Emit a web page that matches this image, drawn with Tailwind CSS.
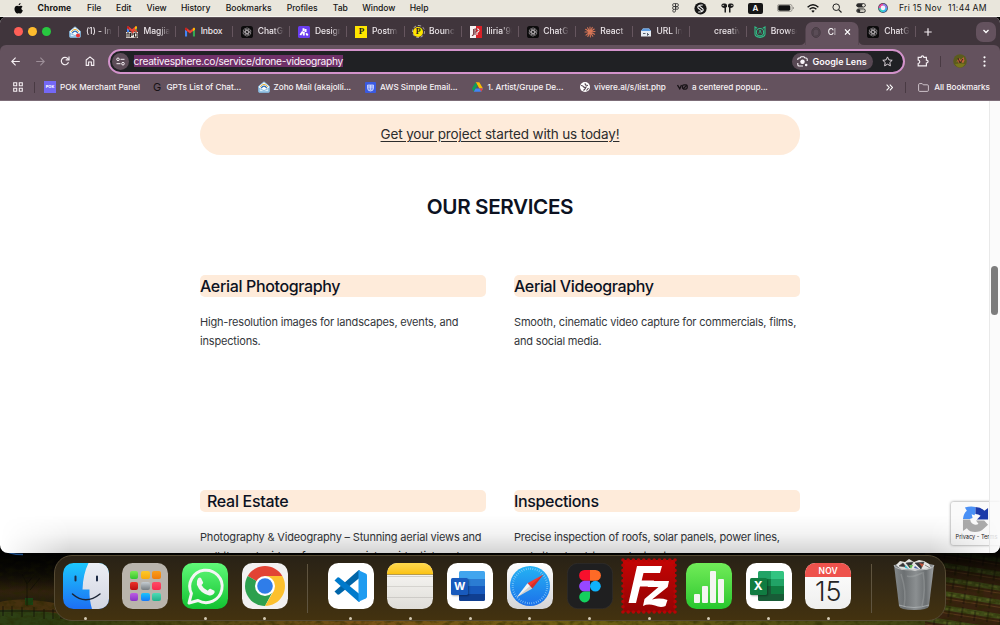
<!DOCTYPE html>
<html lang="en">
<head>
<meta charset="utf-8">
<title>Creative Sphere - Drone Videography</title>
<script src="https://cdn.jsdelivr.net/npm/@tailwindcss/browser@4"></script>
</head>
<body class="relative h-[625px] w-[1000px] overflow-hidden bg-black font-['Inter','Liberation_Sans',sans-serif]">

<!-- Symbols shared by several tabs and bookmarks -->
<svg class="absolute h-0 w-0">
  <defs>
    <symbol id="gpt" viewBox="0 0 12 12"><rect width="12" height="12" rx="2.6" fill="#0c0b0c"/><g fill="none" stroke="#aaa5a9" stroke-width=".65"><rect x="4.4" y="1.9" width="3.4" height="5.6" rx="1.7"/><rect x="4.4" y="1.9" width="3.4" height="5.6" rx="1.7" transform="rotate(60 6 6)"/><rect x="4.4" y="1.9" width="3.4" height="5.6" rx="1.7" transform="rotate(120 6 6)"/><rect x="4.4" y="1.9" width="3.4" height="5.6" rx="1.7" transform="rotate(180 6 6)"/><rect x="4.4" y="1.9" width="3.4" height="5.6" rx="1.7" transform="rotate(240 6 6)"/><rect x="4.4" y="1.9" width="3.4" height="5.6" rx="1.7" transform="rotate(300 6 6)"/></g></symbol>
    <symbol id="zoho" viewBox="0 0 12 12"><path d="M.6 5.200 6 .8l5.400 4.400v5.300q0 .9-.9.9h-9q-.9 0-.9-.9z" fill="#f4fafd" stroke="#7db8e0" stroke-width=".8"/><path d="M2.200 6Q6 .6 9.800 6" fill="none" stroke="#e6b03c" stroke-width="1"/><path d="M3.100 7.200Q6 3 8.900 7.200" fill="none" stroke="#2f6fb8" stroke-width="1.200"/><path d="M1.300 7.400 6 9.600l4.700-2.200v3.300H1.300z" fill="#d9edf8" stroke="#4f97d0" stroke-width=".6"/></symbol>
    <symbol id="gmail" viewBox="0 0 12 12"><path d="M1 2.500v8h2.100V5z" fill="#4285f4"/><path d="M11 2.500v8H8.900V5z" fill="#34a853"/><path d="M1 3.600V2.900q0-1.300 1.300-1.100L6 4.800l3.700-3q1.300-.2 1.300 1.100v.7L6 7.600z" fill="#ea4335"/><path d="M8.900 2.400v2.900L11 3.700v-.8q0-1.600-1.400-1.100z" fill="#fbbc04"/><path d="M1 2.900v.8l2.100 1.600V2.400L2.400 1.800Q1 1.300 1 2.900z" fill="#c5221f"/></symbol>
  </defs>
</svg>

<!-- Desktop wallpaper -->
<svg class="absolute left-0 top-[535px] h-[90px] w-[1000px]" viewBox="0 535 1000 90" preserveAspectRatio="none">
  <defs>
    <linearGradient id="hill" x2="0" y2="1"><stop offset=".2" stop-color="#050505"/><stop offset=".45" stop-color="#171309"/><stop offset=".62" stop-color="#33220f"/><stop offset=".75" stop-color="#211d0c"/><stop offset="1" stop-color="#29280c"/></linearGradient>
    <linearGradient id="shade" x2="0" y2="1"><stop offset=".15" stop-color="#000"/><stop offset=".4" stop-color="#000" stop-opacity=".5"/><stop offset=".65" stop-color="#000" stop-opacity="0"/></linearGradient>
    <linearGradient id="ground" x2="1"><stop offset="0" stop-color="#2c3d10"/><stop offset=".35" stop-color="#7a5318"/><stop offset=".6" stop-color="#6e6014"/><stop offset="1" stop-color="#3d4214"/></linearGradient>
    <pattern id="vines" width="26" height="14" patternUnits="userSpaceOnUse" patternTransform="rotate(9)"><rect width="26" height="14" fill="#38220f"/><path d="M0 2h26v5H0z" fill="#3f4b18"/><path d="M2 4h9M15 5h8" stroke="#566021" stroke-width="1.400"/><path d="M0 9.500h26" stroke="#5a381b"/><path d="M6 1v11M19 3v10" stroke="#120d08" stroke-width=".8"/></pattern>
    <filter id="leaf" x="0" y="0" width="1" height="1"><feTurbulence type="fractalNoise" baseFrequency=".13 .22" numOctaves="3" seed="4"/><feColorMatrix values="0 0 0 0 .02  0 0 0 0 .02  0 0 0 0 0  2.6 0 0 0 -1.05"/></filter>
  </defs>
  <rect y="535" width="1000" height="90" fill="url(#hill)"/>
  <path d="M0 602Q20 596 60 604V625H0z" fill="#46310f"/>
  <path d="M0 610Q25 608 60 614V625H0z" fill="#2d4014"/>
  <path d="M25 598h8v7h-8z" fill="#174414"/>
  <path d="M0 611h60M3 606v10M12 606v10M22 607v10M34 607v10M44 609v10M53 609v10M27 580v26M22 574l5 10 7-9M40 578l-10 12" stroke="#0f0c08" stroke-width=".8" fill="none"/>
  <rect x="50" y="619" width="900" height="6" fill="url(#ground)"/>
  <rect x="925" y="535" width="75" height="90" fill="url(#vines)"/>
  <rect y="535" width="1000" height="90" filter="url(#leaf)" opacity=".5"/>
  <rect y="535" width="1000" height="90" fill="url(#shade)"/>
  <path d="M3 549Q8 554.500 23 554.500" fill="none" stroke="#1d4b85" stroke-width="1.600"/>
</svg>

<div class="relative flex h-[553px] flex-col">

<!-- macOS menu bar -->
<header class="flex h-[17px] shrink-0 items-center border-b border-[#f7f5ef] bg-[#e9e6dc] text-[8.600px] leading-none text-[#161514]">
  <svg class="ml-[14px] h-[11px] w-[9.500px]" viewBox="0 0 19 22" fill="#0b0b0b"><path d="M13.200 0c.2 2.300-1.800 4.600-4 4.500C8.900 2.400 11 .3 13.200 0zM16.900 7.600c-3.300 2.100-2.700 6.300.8 7.600-1 2.900-3 5.800-4.700 5.900-1.400 0-1.800-.8-3.400-.8s-2.100.8-3.400.8C4 21.200.9 16.600.9 12.200c0-4.300 2.700-6.600 5.300-6.600 1.500 0 2.800 1 3.600 1 .9 0 2.300-1.100 4.100-1.100 1 0 2.500.6 3 2.100z"/></svg>
  <nav class="flex pl-[14px] font-medium tracking-[-0.040px]">
    <span class="w-[49.500px] font-bold tracking-[.1px]">Chrome</span><span class="w-[29px]">File</span><span class="w-[30.500px]">Edit</span><span class="w-[34.500px]">View</span><span class="w-[44.700px]">History</span><span class="w-[61px]">Bookmarks</span><span class="w-[46px]">Profiles</span><span class="w-[29.500px]">Tab</span><span class="w-[47.500px]">Window</span><span>Help</span>
  </nav>
  <div class="ml-auto flex items-center pr-[12px]">
    <svg class="mr-[15.500px] h-[10px] w-[7px]" viewBox="0 0 7 10" fill="none" stroke="#333" stroke-width=".8"><path d="M3.500.6H2a1.400 1.400 0 0 0 0 2.900h1.500zM3.500.6H5a1.400 1.400 0 0 1 0 2.900H3.500zM3.500 3.500H2a1.400 1.400 0 0 0 0 2.900h1.500zM2 6.400a1.400 1.400 0 1 0 1.500 1.500V3.500"/><circle cx="5" cy="5" r="1.400"/></svg>
    <svg class="mr-[13.500px] h-[13px] w-[13px]" viewBox="0 0 13 13"><circle cx="6.500" cy="6.500" r="6.100" fill="#161616"/><path d="M8.300 3 5.700 3.200Q3 4.400 4.200 6.200L7.300 8.600M4.700 10l2.600-.2q2.700-1.200 1.500-3L5.700 4.400" fill="none" stroke="#fff" stroke-width="1.100" stroke-linecap="round"/></svg>
    <svg class="mr-[14.500px] h-[10px] w-[13px]" viewBox="0 0 13 10" fill="#1b1b1b"><path d="M.3 2.500Q.5.400 2.500.4H4q2 .1 2 2V4l-1 .6v4.900H3.500V5L2.200 4.800Q.5 4.600.3 2.500zM12.700 2.500Q12.500.4 10.500.4H9q-2 .1-2 2V4l1 .6v4.900h1.500V5l1.300-.2q1.700-.2 1.900-2.300z"/><path d="M1.400 2.400h1.700M9.900 2.400h1.700" stroke="#e9e6dc" stroke-width=".8"/></svg>
    <span class="mr-[14px] flex h-[11px] w-[15px] items-center justify-center rounded-[2px] bg-[#161616] text-[8px] font-semibold text-white">A</span>
    <svg class="mr-[13px] h-[8px] w-[17px]" viewBox="0 0 17 8"><rect x=".4" y=".4" width="14.700" height="7.200" rx="2.200" fill="none" stroke="#8b8983" stroke-width=".8"/><rect x="1.300" y="1.300" width="12" height="5.400" rx="1.400" fill="#111"/><path d="M15.800 2.700q1.200.4 1.200 1.300t-1.200 1.300z" fill="#8b8983"/></svg>
    <svg class="mr-[13px] h-[9px] w-[12px]" viewBox="0 0 12 9" fill="none" stroke="#111" stroke-width="1.400"><path d="M.6 3.200q5.400-4.800 10.800 0M2.600 5.300q3.400-3 6.800 0"/><path d="m4.300 6.800 1.700 1.900 1.700-1.900Q6 5.500 4.300 6.800z" fill="#111" stroke="none"/></svg>
    <svg class="mr-[13.500px] h-[10px] w-[10px]" viewBox="0 0 10 10" fill="none" stroke="#222" stroke-width="1"><circle cx="4.200" cy="4.200" r="3.300"/><path d="m6.600 6.600 2.900 2.900" stroke-width="1.200"/></svg>
    <svg class="mr-[12.500px] h-[10px] w-[10px]" viewBox="0 0 10 10"><rect x=".3" y=".2" width="9.400" height="4.300" rx="2.150" fill="#2a2a2a"/><circle cx="7.500" cy="2.350" r="1.300" fill="#e9e6dc"/><rect x=".7" y="5.900" width="8.600" height="3.600" rx="1.800" fill="#c9c6bd" stroke="#2a2a2a" stroke-width=".9"/><circle cx="2.700" cy="7.700" r="1.600" fill="#2a2a2a"/></svg>
    <svg class="mr-[11px] h-[10px] w-[10px]" viewBox="0 0 10 10"><circle cx="5" cy="5" r="4.900" fill="#48455c"/><path d="M5 .8A4.200 4.200 0 0 0 .8 5l2 1Q3 3 5 2.500z" fill="#ec4ba0"/><path d="M5 .8A4.200 4.200 0 0 1 9.200 5L7 6Q7 3.500 5 2.500z" fill="#8c7ce8"/><path d="M9.200 5A4.200 4.200 0 0 1 5 9.200V7q2 0 2.200-2z" fill="#38b5ec"/><path d="M.8 5A4.200 4.200 0 0 0 5 9.200V7Q3 7 2.800 5z" fill="#35cfc0"/><circle cx="5" cy="4.900" r="2.300" fill="#f5f3fb"/></svg>
    <span class="w-[49px] tracking-[0.280px] whitespace-nowrap">Fri 15 Nov</span><span class="w-[40px] tracking-[0.400px] whitespace-nowrap">11:44&#8201;AM</span>
  </div>
</header>

<!-- Chrome window -->
<main class="flex min-h-0 flex-1 flex-col overflow-hidden rounded-t-[6px] rounded-b-[8px] bg-white">

  <!-- Tab strip -->
  <div class="flex h-[28px] shrink-0 items-center border-t border-[#5b5157] bg-[#40353c] text-[8.500px] leading-none font-medium tracking-[-0.030px] text-[#ece6ea]">
    <div class="flex w-[62px] shrink-0 gap-[5px] pl-[14px]"><i class="size-[9px] rounded-full bg-[#ff5f57]"></i><i class="size-[9px] rounded-full bg-[#febc2e]"></i><i class="size-[9px] rounded-full bg-[#28c840]"></i></div>

    <div class="flex w-[57.100px] shrink-0 items-center pl-[7px]"><svg class="mr-[5px] size-[12px] shrink-0"><use href="#zoho"/><circle cx="9" cy="9.500" r="2" fill="#e33"/></svg><span class="w-[26px] overflow-hidden whitespace-nowrap mask-r-from-60%">(1) - Inbox</span><i class="ml-auto h-[11px] w-px bg-[#66565f]"></i></div>
    <div class="flex w-[57.100px] shrink-0 items-center pl-[7px]"><svg class="mr-[5.500px] size-[12px] shrink-0" viewBox="0 0 12 12"><use href="#gmail" y="-1.500" width="12" height="12"/><rect y="6" width="12" height="5.800" fill="#efe9e4"/><path d="M1 11V7h2v4M4.500 11V7H7v2H5M8.500 7h2.500v4H8.500z" fill="none" stroke="#29211f" stroke-width="1"/><path d="m6 7 3-3 2 2" stroke="#e94335" stroke-width="1.400" fill="none"/></svg><span class="w-[26px] overflow-hidden whitespace-nowrap mask-r-from-60%">Magjiaprint</span><i class="ml-auto h-[11px] w-px bg-[#66565f]"></i></div>
    <div class="flex w-[57.100px] shrink-0 items-center pl-[8px]"><svg class="mr-[4.500px] size-[12px] shrink-0"><use href="#gmail"/></svg><span class="w-[26px] overflow-hidden tracking-[-0.150px] whitespace-nowrap">Inbox</span><i class="ml-auto h-[11px] w-px bg-[#66565f]"></i></div>
    <div class="flex w-[57.100px] shrink-0 items-center pl-[8px]"><svg class="mr-[4.500px] size-[12px] shrink-0"><use href="#gpt"/></svg><span class="w-[26px] overflow-hidden whitespace-nowrap mask-r-from-60%">ChatGPT</span><i class="ml-auto h-[11px] w-px bg-[#66565f]"></i></div>
    <div class="flex w-[57.100px] shrink-0 items-center pl-[8px]"><svg class="mr-[4.500px] size-[12px] shrink-0" viewBox="0 0 12 12"><rect width="12" height="12" rx="1.500" fill="#6a3df0"/><path d="M2.300 9 4.800 5.500M5.500 2.200v3M5.800 6v3.500M7.600 3v3M8.200 7.200 9.700 9.500" stroke="#fff" stroke-width="1.900" fill="none"/></svg><span class="w-[26px] overflow-hidden whitespace-nowrap mask-r-from-60%">Design tool</span><i class="ml-auto h-[11px] w-px bg-[#66565f]"></i></div>
    <div class="flex w-[57.100px] shrink-0 items-center pl-[8px]"><span class="mr-[4.500px] flex size-[12px] shrink-0 items-center justify-center bg-[#ffe600] font-['Liberation_Serif',serif] text-[9px] font-bold text-[#222]">P</span><span class="w-[26px] overflow-hidden whitespace-nowrap mask-r-from-60%">Postmark</span><i class="ml-auto h-[11px] w-px bg-[#66565f]"></i></div>
    <div class="flex w-[57.100px] shrink-0 items-center pl-[7px]"><span class="mr-[4.500px] flex size-[13px] shrink-0 items-center justify-center rounded-full border border-dashed border-[#b5adab]"><b class="flex size-[10px] shrink-0 items-center justify-center rounded-full bg-[#ffe600] font-['Liberation_Serif',serif] text-[8px] text-[#222]">P</b></span><span class="w-[26px] overflow-hidden whitespace-nowrap mask-r-from-60%">Bounce</span><i class="ml-auto h-[11px] w-px bg-[#66565f]"></i></div>
    <div class="flex w-[57.100px] shrink-0 items-center pl-[8px]"><svg class="mr-[4.500px] size-[12px] shrink-0" viewBox="0 0 12 12"><path d="M0 0h6v12H0z" fill="#f6f3f2"/><path d="M6 0h6v12H6z" fill="#d92128"/><path d="M3.600 3v5q0 1.600-1.700 1.600M5 9V3h2.600q1.700 1.600 0 3H5" fill="none" stroke="#7b3c42" stroke-width="1.100"/><path d="M7 3h1.400q1.200 1.500 0 3H7v3" fill="none" stroke="#fff" stroke-width="1"/></svg><span class="w-[26px] overflow-hidden whitespace-nowrap mask-r-from-60%">Iliria'98</span><i class="ml-auto h-[11px] w-px bg-[#66565f]"></i></div>
    <div class="flex w-[57.100px] shrink-0 items-center pl-[8px]"><svg class="mr-[4.500px] size-[12px] shrink-0"><use href="#gpt"/></svg><span class="w-[26px] overflow-hidden whitespace-nowrap mask-r-from-60%">ChatGPT</span><i class="ml-auto h-[11px] w-px bg-[#66565f]"></i></div>
    <div class="flex w-[57.100px] shrink-0 items-center pl-[8px]"><svg class="mr-[4.500px] size-[12px] shrink-0" viewBox="0 0 12 12" stroke="#d97757" stroke-width="1.050" stroke-linecap="round"><path d="M6 6V1M6 6l2.300-4.600M6 6l4.200-3M6 6l5-.6M6 6l4.600 2.200M6 6l2.800 4.200M6 6l.4 5M6 6l-2.200 4.500M6 6 2 9.200M6 6H1M6 6 1.600 3.300M6 6 3.500 1.700"/></svg><span class="w-[26px] overflow-hidden whitespace-nowrap mask-r-from-75%">React</span><i class="ml-auto h-[11px] w-px bg-[#66565f]"></i></div>
    <div class="flex w-[57.100px] shrink-0 items-center pl-[7px]"><svg class="mr-[4.500px] size-[12px] shrink-0" viewBox="0 0 12 12"><path d="M1 5 3 2.500h6L11 5v5.500H1z" fill="#e6ebf2"/><path d="M1 5 3 2.500h6L11 5z" fill="#5d9be0"/><path d="M3 7.500h2.500M7.500 7v2.500L9 8" stroke="#58606e" fill="none"/></svg><span class="w-[26px] overflow-hidden whitespace-nowrap mask-r-from-60%">URL Inspect</span><i class="ml-auto h-[11px] w-px bg-[#66565f]"></i></div>
    <div class="flex w-[57.100px] shrink-0 items-center pl-[24px]"><span class="w-[26px] overflow-hidden whitespace-nowrap mask-r-from-60%">creative</span><i class="ml-auto h-[11px] w-px bg-[#66565f]"></i></div>
    <div class="flex w-[57.100px] shrink-0 items-center pl-[7px]"><svg class="mr-[4.500px] size-[12px] shrink-0" viewBox="0 0 12 12" fill="none" stroke="#2fbf88" stroke-width="1.100"><path d="M3.200 2.200 1 1v7.300q0 1.700 2 2.300l3 .9 3-.9q2-.6 2-2.300V1L8.800 2.200"/><circle cx="6" cy="6.200" r="3.700"/><path d="m4.700 7.700.8-2 .5-1.700 1.400 3.700" stroke-width=".8"/></svg><span class="w-[26px] overflow-hidden whitespace-nowrap mask-r-from-60%">Browser</span></div>

    <!-- Active tab -->
    <div class="relative flex h-[23px] w-[53px] shrink-0 translate-x-[1.500px] translate-y-[2px] items-center rounded-t-[7px] bg-[#64525e] pb-[3px] pl-[5px]">
      <svg class="absolute bottom-0 -left-[6px] size-[6px]" viewBox="0 0 6 6"><path d="M6 0v6H0q6 0 6-6z" fill="#64525e"/></svg>
      <svg class="absolute -right-[6px] bottom-0 size-[6px]" viewBox="0 0 6 6"><path d="M0 0v6h6Q0 6 0 0z" fill="#64525e"/></svg>
      <svg class="mr-[6px] size-[11px] shrink-0" viewBox="0 0 12 12" fill="#5a4c56" stroke="#40363d" stroke-width=".9"><ellipse cx="6" cy="6" rx="4.600" ry="5.400"/><path d="M3 9V3.500L6 2l3 1.500V7Q9 10 4 10" fill="none" stroke-width=".6"/></svg><span class="w-[8.500px] overflow-hidden whitespace-nowrap text-white mask-r-from-70%">Cl</span>
      <svg class="ml-[8px] size-[6px]" viewBox="0 0 6 6" stroke="#fff" stroke-width="1.300"><path d="m.4.400 5.200 5.200M5.600.4.400 5.600"/></svg>
    </div>
    <div class="flex w-[58.500px] shrink-0 items-center pl-[10px]"><svg class="mr-[5px] size-[12px] shrink-0"><use href="#gpt"/></svg><span class="w-[26px] overflow-hidden whitespace-nowrap mask-r-from-60%">ChatGPT</span><i class="ml-auto h-[11px] w-px bg-[#66565f]"></i></div>
    <svg class="ml-[8.500px] size-[8px]" viewBox="0 0 8 8" stroke="#f3edf1" stroke-width="1.200"><path d="M4 .3v7.400M.3 4h7.400"/></svg>
    <span class="mr-[4.500px] ml-auto flex h-[20px] w-[19.500px] items-center justify-center rounded-[7px] bg-[#64525e]"><svg class="h-[5px] w-[6px]" viewBox="0 0 6 5" fill="none" stroke="#fff" stroke-width="1.300"><path d="m.5 1 2.500 2.500L5.500 1"/></svg></span>
  </div>

  <!-- Toolbar -->
  <div class="shrink-0 bg-[#40353c]">
  <div class="flex h-[32px] items-center rounded-t-[6px] bg-[#64525e]">
    <svg class="ml-[11px] size-[9px]" viewBox="0 0 9 9" fill="none" stroke="#f5eff3" stroke-width="1.100"><path d="M8.800 4.500H.9M4.600.7.800 4.500l3.800 3.800"/></svg>
    <svg class="ml-[15.500px] size-[9px]" viewBox="0 0 9 9" fill="none" stroke="#9d8e98" stroke-width="1.100"><path d="M.2 4.500h7.900M4.400.7l3.800 3.800-3.800 3.800"/></svg>
    <svg class="ml-[15.500px] size-[10px]" viewBox="0 0 10 10" fill="none" stroke="#f5eff3" stroke-width="1.200"><path d="M8.500 6.300A3.700 3.700 0 1 1 7.900 2.700l.9.900"/><path d="M9 .6v3.300H5.700"/></svg>
    <svg class="ml-[15px] h-[10px] w-[10px]" viewBox="0 0 10 10" fill="none" stroke="#f5eff3" stroke-width="1.100"><path d="M1.200 4 5 .9 8.800 4v5.400H6.400V6H3.600v3.400H1.200z"/></svg>
    <div class="ml-[12.500px] flex h-[25px] w-[797px] items-center rounded-full border-2 border-[#d393cb] bg-[#202124] pl-[2px]">
      <span class="flex size-[17px] items-center justify-center rounded-full bg-[#5d4d58]"><svg class="size-[9px]" viewBox="0 0 9 9" fill="none" stroke="#f5eff3" stroke-width="1"><circle cx="2" cy="2.300" r="1.300"/><path d="M4.500 2.300h4M.5 6.700h4"/><circle cx="7" cy="6.700" r="1.300"/></svg></span>
      <span class="ml-[5px] bg-[#6f3068] text-[10.200px] leading-[12px] tracking-[-0.290px] whitespace-nowrap text-[#fbf3fa]">creativesphere.co/service/drone-videography</span>
      <span class="ml-auto flex h-[17px] w-[81px] items-center rounded-full bg-[#574853] pl-[5.500px] text-[9px] leading-none font-semibold whitespace-nowrap text-[#fbf6fa]"><svg class="mr-[4.500px] size-[11px] shrink-0" viewBox="0 0 11 11" fill="none" stroke="#fbf6fa" stroke-width="1.100"><path d="M.8 4V3.300Q.8 2 2 2h1L4 .8h3L8 2h1q1.200 0 1.200 1.300V5M.8 7v1.700Q.8 10 2.100 10H6"/><circle cx="5.500" cy="5.800" r="1.700" fill="#fbf6fa"/><circle cx="9.200" cy="9" r=".7" fill="#fbf6fa"/></svg>Google Lens</span>
      <svg class="mr-[10px] ml-[9px] size-[11px]" viewBox="0 0 11 11" fill="none" stroke="#eee6ec" stroke-width=".9"><path d="m5.500.9 1.400 3 3.300.4-2.400 2.200.6 3.300-2.900-1.600-2.900 1.600.6-3.300L.8 4.300l3.300-.4z"/></svg>
    </div>
    <svg class="ml-[12px] size-[12px]" viewBox="0 0 12 12" fill="none" stroke="#f5eff3" stroke-width="1.200"><path d="M1.200 2.400h2.900q.2-1.500 1.400-1.500t1.400 1.500h2.500v2.800q1.700.1 1.700 1.400T9.400 8v2.900H1.200V8.500q1.600-.4 1.600-1.800T1.200 5z"/></svg>
    <i class="ml-[11.500px] h-[11px] w-px bg-[#493a43]"></i>
    <svg class="ml-[11.500px] size-[14px]" viewBox="0 0 14 14"><circle cx="7" cy="7" r="6.800" fill="#5b5c1d"/><path d="M3 8.500 6 4l2 2 2.500-3 1 3.500-1.500 3-2-2.500L6 10 5 7z" fill="#c4613b"/><path d="m5 4 2 5 3-4" stroke="#40221c" fill="none"/><path d="M2 10q5-1 10 0-2 3.500-5 3.500T2 10z" fill="#78761c"/></svg>
    <svg class="ml-[16px] h-[11px] w-[3px]" viewBox="0 0 3 11" fill="#fff"><circle cx="1.500" cy="1.300" r="1.100"/><circle cx="1.500" cy="5.500" r="1.100"/><circle cx="1.500" cy="9.700" r="1.100"/></svg>
  </div>
  </div>

  <!-- Bookmarks bar -->
  <div class="flex h-[24px] shrink-0 items-center border-b border-[#7c6c77] bg-[#64525e] pb-[3px] text-[8.200px] leading-none font-medium tracking-[-0.030px] whitespace-nowrap text-[#f8f3f6]">
    <svg class="ml-[13px] size-[10px]" viewBox="0 0 10 10" fill="none" stroke="#f5eff3" stroke-width="1.100"><path d="M.7.700h3v3h-3zM6.300.7h3v3h-3zM.7 6.300h3v3h-3zM6.300 6.300h3v3h-3z"/></svg>
    <i class="ml-[11px] h-[11px] w-px bg-[#493a43]"></i>
    <span class="ml-[9px] flex h-[12px] w-[12px] items-center justify-center bg-[#7468f5] text-[4px] font-bold text-white">POK</span>
    <span class="ml-[4px] w-[93px]">POK Merchant Panel</span>
    <span class="w-[13.500px] text-[11px] font-normal text-[#171216]">G</span><span class="w-[91.500px] tracking-[-0.010px]">GPTs List of Chat...</span>
    <svg class="mr-[3.500px] size-[12px] shrink-0"><use href="#zoho"/></svg><span class="w-[91.500px]">Zoho Mail (akajolli...</span>
    <svg class="mr-[4px] size-[11px] shrink-0" viewBox="0 0 11 11"><rect width="11" height="11" rx="1" fill="#3a5ae0"/><path d="M2.500 3h6v3q0 3-3 3t-3-3z" fill="#7f98f4" stroke="#e9edff" stroke-width=".7"/><path d="M3 5h5M5.500 3v5" stroke="#e9edff" stroke-width=".6"/></svg><span class="w-[92px]">AWS Simple Email...</span>
    <svg class="mr-[4.500px] h-[10px] w-[11px] shrink-0" viewBox="0 0 11 10"><path d="M3.700.2h3.600L11 6.600H7.400z" fill="#fbbc04"/><path d="M3.700.2 5.500 3.400 1.800 9.800 0 6.600z" fill="#0f9d58"/><path d="M3.600 6.600H11L9.200 9.800H1.800z" fill="#4285f4"/><path d="M7.400 6.600H11L9.200 9.800z" fill="#ea4335"/></svg><span class="w-[92px]">1. Artist/Grupe De...</span>
    <svg class="mr-[4.500px] size-[10px] shrink-0" viewBox="0 0 10 10"><circle cx="5" cy="5" r="5" fill="#fff"/><path d="M1 3.500q2 0 2.500 1.200T6 5.200L5 7 3.500 8.500M5 1.300l.5 1.700L8 3.500M6.500 8.500l2-2.500" fill="none" stroke="#544650" stroke-width="1.200"/></svg><span class="w-[83px]">vivere.al/s/list.php</span>
    <svg class="mr-[4px] h-[6px] w-[11px] shrink-0" viewBox="0 0 11 6" fill="none" stroke="#181317" stroke-width="1.300"><path d="m.5 1 2.300 3.800L4.500 1"/><rect x="5.500" y=".8" width="4.700" height="4.300" rx="1.500"/><path d="m6 5 4-4"/></svg><span>a centered popup...</span>
    <svg class="ml-auto h-[7px] w-[7px]" viewBox="0 0 7 7" fill="none" stroke="#fff" stroke-width="1.100"><path d="m.6.700 2.600 2.800L.6 6.300M3.800.7l2.600 2.800-2.600 2.800"/></svg>
    <i class="ml-[12.500px] h-[11px] w-px bg-[#493a43]"></i>
    <svg class="mr-[5px] ml-[12px] h-[9px] w-[11px]" viewBox="0 0 11 9" fill="none" stroke="#d8ced5" stroke-width=".9"><path d="M.6 7.300V1.700Q.6.6 1.700.6h2.500l1 1.200h4.100q1.100 0 1.100 1.100v4.400q0 1.100-1.100 1.100H1.700Q.6 8.400.6 7.300z"/></svg>
    <span class="mr-[10px]">All Bookmarks</span>
  </div>

  <!-- Web page -->
  <div class="relative flex min-h-0 flex-1">
    <section class="flex flex-1 flex-col overflow-hidden px-[200px] pt-[12.500px] pr-[189px] text-[#33363b]">
      <a class="flex h-[41.500px] shrink-0 items-center justify-center rounded-full bg-[#feebda] pt-[1px] text-[13.500px] leading-none tracking-[-0.140px] text-[#2c2c2c] underline underline-offset-[2px]">Get your project started with us today!</a>
      <h2 class="mt-[39px] text-center text-[20.700px] leading-[26px] font-semibold tracking-[-0.380px] text-[#0c1222]">OUR SERVICES</h2>
      <div class="mt-[54.500px] grid shrink-0 grid-cols-2 gap-x-[28px] text-[11px] leading-[19.500px] tracking-[-0.180px]">
        <article class="h-[215px]"><h3 class="h-[22px] rounded-[5px] bg-[#feebda] text-[16px] leading-[22px] font-medium tracking-[-0.350px] text-[#0c1222]">Aerial Photography</h3><p class="mt-[16px] whitespace-nowrap">High-resolution images for landscapes, events, and<br>inspections.</p></article>
        <article class="h-[215px]"><h3 class="h-[22px] rounded-[5px] bg-[#feebda] text-[16px] leading-[22px] font-medium tracking-[-0.370px] text-[#0c1222]">Aerial Videography</h3><p class="mt-[16px] whitespace-nowrap">Smooth, cinematic video capture for commercials, films,<br>and social media.</p></article>
        <article><h3 class="h-[22px] rounded-[5px] bg-[#feebda] pl-[7px] text-[16px] leading-[22px] font-medium tracking-[-0.300px] text-[#0c1222]">Real Estate</h3><p class="mt-[16px] whitespace-nowrap">Photography &amp; Videography – Stunning aerial views and<br>walkthrough videos for commercial, residential, and</p></article>
        <article><h3 class="h-[22px] rounded-[5px] bg-[#feebda] text-[16px] leading-[22px] font-medium tracking-[-0.350px] text-[#0c1222]">Inspections</h3><p class="mt-[16px] tracking-[-0.210px] whitespace-nowrap">Precise inspection of roofs, solar panels, power lines,<br>and other hard-to-reach structures.</p></article>
      </div>
    </section>

    <!-- reCAPTCHA badge -->
    <aside class="absolute right-0 bottom-[8.500px] flex h-[43px] w-[49px] flex-col items-center rounded-l-[2px] bg-[#fafafa] pt-[4px] shadow-[0_0_3px_#808080]">
      <svg class="h-[27px] w-[27px]" viewBox="0 0 28 28"><path d="M1 13.500Q1.500 7.500 5 4.800L3 1.500Q8.500 0 14 1v7q-1 .3-1 1.500l-3-1 1 4-3 1z" fill="#4a90f5"/><path d="M14 1q5.500 0 9.300 4L27 2v12H15.500l3.800-3.800Q17 8.300 14 8.200z" fill="#1c3aa9"/><path d="M1 14h7.500q.5 4.500 5 5.500 2.500.2 3.500-1l-2.500-3.500h8.500l4 4.500-4 3.500q-4 4-9.500 4-5.500 0-8.500-4L1 26z" fill="#ababab"/></svg>
      <span class="pt-[2px] pl-[2px] text-[5.600px] leading-none whitespace-nowrap text-[#222]">Privacy - Terms</span>
    </aside>

    <!-- Page scrollbar -->
    <div class="relative flex w-[11px] justify-center border-l border-[#e9e9e9] bg-[#fafafa]/85 pt-[165px] pr-px"><i class="h-[49px] w-[7px] rounded-full bg-[#7d7d7d]"></i></div>

    <!-- Shade that the dock casts on the window -->
    <div class="pointer-events-none absolute inset-x-0 bottom-0 h-[38px] bg-linear-to-t from-black/17 via-black/5 to-transparent mask-x-from-93%"></div>
  </div>
</main>
</div>

<!-- Dock -->
<footer class="absolute top-[554.500px] left-[54px] flex h-[66.500px] w-[892px] rounded-[18px] border border-[#554a33] bg-linear-to-b from-[#292216] to-[#43320f] pt-[7.500px] pl-[.800px]">
  <div class="flex w-[59.700px] shrink-0 flex-col items-center gap-[7.500px]">
    <svg class="size-[46px]" viewBox="0 0 46 46"><defs><linearGradient id="fb" x2="0" y2="1"><stop stop-color="#1cc7fd"/><stop offset="1" stop-color="#1d6ff3"/></linearGradient><linearGradient id="fw" x2="0" y2="1"><stop stop-color="#eceef4"/><stop offset="1" stop-color="#d2d6e2"/></linearGradient><clipPath id="r"><rect width="46" height="46" rx="10.500"/></clipPath></defs><g clip-path="url(#r)"><path d="M0 0h46v46H0z" fill="url(#fb)"/><path d="M25.500 0Q20 11 19.500 26.500h7Q26 36 29 46h17V0z" fill="url(#fw)"/></g><path d="M12.500 13.500v4M34 13.500v4" stroke="#1c2a44" stroke-width="2" stroke-linecap="round"/><path d="M9.500 31q13 11.500 27.500 0" fill="none" stroke="#1b2434" stroke-width="1.500" stroke-linecap="round"/></svg>
    <i class="size-[3px] rounded-full bg-[#d5cbb5]"></i>
  </div>
  <div class="flex w-[59.700px] shrink-0 flex-col items-center">
    <div class="grid size-[46px] grid-cols-[8.500px_8.500px_8.500px] place-content-center gap-[2.700px] rounded-[10.500px] bg-[#b9b4ac]"><i class="size-[8.500px] rounded-[2px] bg-linear-to-b from-[#7bea55] to-[#2fc52e]"></i><i class="size-[8.500px] rounded-[2px] bg-linear-to-b from-[#fcc928] to-[#f7a90c]"></i><i class="size-[8.500px] rounded-[2px] bg-linear-to-b from-[#fb9d1a] to-[#ee7c0c]"></i><i class="size-[8.500px] rounded-[2px] bg-linear-to-b from-[#ee3028] to-[#b80d10]"></i><i class="size-[8.500px] rounded-[2px] bg-linear-to-b from-[#c6cdd2] to-[#767d82]"></i><i class="size-[8.500px] rounded-[2px] bg-linear-to-b from-[#ff4a67] to-[#f72b4c]"></i><i class="size-[8.500px] rounded-[2px] bg-linear-to-b from-[#bd5be3] to-[#8734c6]"></i><i class="size-[8.500px] rounded-[2px] bg-linear-to-b from-[#1fc3fb] to-[#1b78f7]"></i><i class="size-[8.500px] rounded-[2px] bg-linear-to-b from-[#4ddbb5] to-[#20b18c]"></i></div>
  </div>
  <div class="flex w-[59.700px] shrink-0 flex-col items-center gap-[7.500px]">
    <svg class="size-[46px]" viewBox="0 0 46 46"><defs><linearGradient id="wa" x2="0" y2="1"><stop stop-color="#60f978"/><stop offset="1" stop-color="#12c231"/></linearGradient></defs><rect width="46" height="46" rx="10.500" fill="url(#wa)"/><path d="M7 40l2.400-9.500A16.200 16.200 0 1 1 16 37.500z" fill="none" stroke="#f5f5f5" stroke-width="3" stroke-linejoin="round"/><path d="M16 15.500q1.700-1.800 3-.6l2.200 4.500q0 1-1.700 2.700 2 4 6.300 5.700 1.400-2.300 2.600-2l4 2q1 1.500-.8 3.200-2 2-5 1.200-8.500-2.200-11.700-10.500-.7-3.400 1.100-6.200z" fill="#f5f5f5"/></svg>
    <i class="size-[3px] rounded-full bg-[#d5cbb5]"></i>
  </div>
  <div class="flex w-[59.700px] shrink-0 flex-col items-center gap-[7.500px]">
    <svg class="size-[46px]" viewBox="0 0 46 46"><rect width="46" height="46" rx="10.500" fill="#f2f1f1"/><path d="M23 23 5.700 13A20 20 0 0 1 40.300 13z" fill="#e24334"/><path d="M23 23 5.700 13A20 20 0 0 0 23 43l8-15z" fill="#2da04e"/><path d="M23 13h17.300A20 20 0 0 1 23 43l8.700-15z" fill="#fcc02e"/><circle cx="23" cy="23" r="10" fill="#fff"/><circle cx="23" cy="23" r="7.800" fill="#2f7de9"/></svg>
    <i class="size-[3px] rounded-full bg-[#d5cbb5]"></i>
  </div>
  <i class="mx-[12.700px] mt-[.5px] h-[49px] w-px shrink-0 bg-[#5f543f]"></i>
  <div class="flex w-[59.700px] shrink-0 flex-col items-center gap-[7.500px]">
    <svg class="size-[46px]" viewBox="0 0 46 46"><rect width="46" height="46" rx="10.500" fill="#fff"/><path d="m6.500 28.500 3 3q1 .4 2-.3L32 14.500V7.500l-1.500-.2z" fill="#0065a9"/><path d="M6.500 17.500l3-3q1-.4 2 .3L32 31.500v7l-1.500.2z" fill="#007acc"/><path d="m30.500 7.300 7.200 3.300q1.300.7 1.300 2v20.800q0 1.300-1.300 2l-7.200 3.300V7.300z" fill="#1f9cf0"/></svg>
    <i class="size-[3px] rounded-full bg-[#d5cbb5]"></i>
  </div>
  <div class="flex w-[59.700px] shrink-0 flex-col items-center gap-[7.500px]">
    <div class="flex size-[46px] flex-col overflow-hidden rounded-[10.500px] bg-linear-to-b from-[#fbfaf8] to-[#dfddd8]"><i class="h-[11px] shrink-0 bg-linear-to-b from-[#ffd94c] to-[#fbc30e]"></i><i class="h-[3px] shrink-0 border-t border-b border-t-[#b59b51] border-b-[#d0cfcb]"></i><i class="mt-[9px] h-px shrink-0 bg-[#d5d3cf]"></i><i class="mt-[10px] h-px shrink-0 bg-[#cdcbc7]"></i></div>
    <i class="size-[3px] rounded-full bg-[#d5cbb5]"></i>
  </div>
  <div class="flex w-[59.700px] shrink-0 flex-col items-center gap-[7.500px]">
    <div class="relative flex size-[46px] items-center rounded-[10.500px] bg-white pl-[12px]"><div class="grid h-[30px] w-[26px] grid-rows-4 overflow-hidden rounded-[1.500px]"><i class="bg-[#41a5ee]"></i><i class="bg-[#2b7cd3]"></i><i class="bg-[#185abd]"></i><i class="bg-[#103f91]"></i></div><b class="absolute top-[14.500px] left-[4px] flex size-[17px] items-center justify-center rounded-[1.500px] bg-[#185abd] text-[11px] leading-none text-white shadow-[1px_1px_2px_#0005]">W</b></div>
    <i class="size-[3px] rounded-full bg-[#d5cbb5]"></i>
  </div>
  <div class="flex w-[59.700px] shrink-0 flex-col items-center gap-[7.500px]">
    <svg class="size-[46px]" viewBox="0 0 46 46"><defs><linearGradient id="sf" x2="0" y2="1"><stop stop-color="#fff"/><stop offset="1" stop-color="#d4d4d6"/></linearGradient><linearGradient id="sb" x2="0" y2="1"><stop stop-color="#25b3f3"/><stop offset="1" stop-color="#1c70ea"/></linearGradient></defs><rect width="46" height="46" rx="10.500" fill="url(#sf)"/><circle cx="23" cy="23" r="20" fill="url(#sb)"/><circle cx="23" cy="23" r="17.300" fill="none" stroke="#9fd8f8" stroke-width="2" stroke-dasharray=".6 1.660"/><path d="m36.500 11.500-11.200 14-4.800-5.300z" fill="#f6372f"/><path d="m9.500 34.500 11-14.300 4.800 5.300z" fill="#f5f3f3"/><path d="m36.500 11.500-27 23 15.800-9z" fill="#000" opacity=".14"/></svg>
    <i class="size-[3px] rounded-full bg-[#d5cbb5]"></i>
  </div>
  <div class="flex w-[59.700px] shrink-0 flex-col items-center gap-[7.500px]">
    <svg class="size-[46px]" viewBox="0 0 46 46"><rect x=".3" y=".3" width="45.400" height="45.400" rx="10.500" fill="#1f1f20" stroke="#363330" stroke-width=".6"/><path d="M23 7h-5.500a5.400 5.400 0 0 0 0 10.800H23z" fill="#f8102c"/><path d="M23 7h5.500a5.400 5.400 0 0 1 0 10.800H23z" fill="#ff6a26"/><path d="M23 17.800h-5.500a5.400 5.400 0 0 0 0 10.800H23z" fill="#9747ff"/><circle cx="28.400" cy="23.200" r="5.400" fill="#0fb2fb"/><path d="M23 28.600h-5.500A5.400 5.400 0 1 0 23 34z" fill="#14cf5e"/></svg>
    <i class="size-[3px] rounded-full bg-[#d5cbb5]"></i>
  </div>
  <div class="flex w-[59.700px] shrink-0 flex-col items-center">
    <svg class="-mt-[5px] mb-[2.500px] size-[56px] shrink-0" viewBox="0 0 56 56"><defs><linearGradient id="fz" x2="0" y2="1"><stop stop-color="#c40404"/><stop offset="1" stop-color="#930404"/></linearGradient></defs><path d="M2 2h52v52H2z" fill="url(#fz)"/><path d="M2 2h52v52H2z" fill="none" stroke="#b50505" stroke-width="3.600" stroke-dasharray="0 5.200" stroke-linecap="round"/><path d="M16 8h25l-2 7H22.500l-1.800 7.500H33l-1.800 6H19L15 45H7.500z" fill="#fff"/><path d="M28 23h20l-1.300 6L31 41.500q8-2 15.500.5l-2 6q-5 2-10.500-.5-7-2-12 .5l1.500-7L37.500 29H26.700z" fill="#fff"/></svg>
    <i class="size-[3px] rounded-full bg-[#d5cbb5]"></i>
  </div>
  <div class="flex w-[59.700px] shrink-0 flex-col items-center gap-[7.500px]">
    <div class="flex size-[46px] items-end justify-center gap-[2px] rounded-[10.500px] bg-linear-to-b from-[#70ec58] to-[#23c72d] pb-[6.500px]"><i class="h-[9px] w-[6px] rounded-[1px] bg-[#f3f5f1]"></i><i class="h-[17px] w-[6px] rounded-[1px] bg-[#f3f5f1]"></i><i class="h-[32px] w-[6px] rounded-[1px] bg-[#f3f5f1]"></i><i class="h-[24px] w-[6px] rounded-[1px] bg-[#f3f5f1]"></i></div>
    <i class="size-[3px] rounded-full bg-[#d5cbb5]"></i>
  </div>
  <div class="flex w-[59.700px] shrink-0 flex-col items-center gap-[7.500px]">
    <div class="relative flex size-[46px] items-center rounded-[10.500px] bg-white pl-[12px]"><div class="grid h-[30px] w-[26px] grid-cols-2 grid-rows-4 overflow-hidden rounded-[1.500px]"><i class="bg-[#21a366]"></i><i class="bg-[#33c481]"></i><i class="bg-[#107c41]"></i><i class="bg-[#21a366]"></i><i class="bg-[#185c37]"></i><i class="bg-[#107c41]"></i><i class="col-span-2 bg-[#185c37]"></i></div><b class="absolute top-[14.500px] left-[4px] flex size-[17px] items-center justify-center rounded-[1.500px] bg-[#107c41] text-[12px] leading-none text-white shadow-[1px_1px_2px_#0005]">X</b></div>
    <i class="size-[3px] rounded-full bg-[#d5cbb5]"></i>
  </div>
  <div class="flex w-[59.700px] shrink-0 flex-col items-center gap-[7.500px]">
    <div class="flex size-[46px] flex-col overflow-hidden rounded-[10.500px] bg-linear-to-b from-white to-[#efefee] text-center"><b class="h-[14px] shrink-0 bg-[#ee524c] pt-[1.500px] text-[8.500px] leading-[13.500px] font-semibold tracking-[.2px] text-white">NOV</b><span class="text-[27px] leading-[30px] font-light tracking-[0px] text-[#262626]">15</span></div>
    <i class="size-[3px] rounded-full bg-[#d5cbb5]"></i>
  </div>
  <i class="mt-[.5px] mr-[12px] ml-[12.700px] h-[49px] w-px shrink-0 bg-[#5f543f]"></i>
  <div class="flex w-[59.700px] shrink-0 justify-center">
    <svg class="-mt-[5px] h-[54px] w-[44px]" viewBox="0 0 44 54"><defs><linearGradient id="tr" x2="1"><stop stop-color="#85898b"/><stop offset=".25" stop-color="#6c7072"/><stop offset=".55" stop-color="#8b8f91"/><stop offset=".8" stop-color="#6b6f71"/><stop offset="1" stop-color="#a0a3a5"/></linearGradient></defs><path d="M2 7q20-6 40 0l-5 41q-1 4-15 4T7 48z" fill="url(#tr)"/><path d="m4 7 4-4 5 1 4-3 5 3 5-2 5 1 5 3 2 4-5 2-6-1-5 2-7-2-6 1z" fill="#e4e4e1"/><path d="m7 8 4-3 3 4zM14 5l4 5 3-6zM23 5l6 6 3-7zM33 7l5 3" fill="#343436" stroke="#444" stroke-width=".6"/><path d="m13 7 4 4-4-1z" fill="#3bbad0"/><path d="m17 7 2 4 2-4z" fill="#62bb55"/><path d="m27 5 3 4 2-3z" fill="#c0543c"/><path d="m23 8 4 3-5-1z" fill="#4960a8"/><path d="M2 7q0 5 20 5t20-5" fill="none" stroke="#b8bbbc" stroke-width="1"/><path d="M9 16q6 18 3 33M30 15q-10 5-15 3M31 14q3 18-1 34" fill="none" stroke="#b5b9ba" stroke-width="1.500" opacity=".3"/><path d="M7 47q15 5 30 0" fill="none" stroke="#b5b9ba" opacity=".7"/></svg>
  </div>
</footer>
</body>
</html>
